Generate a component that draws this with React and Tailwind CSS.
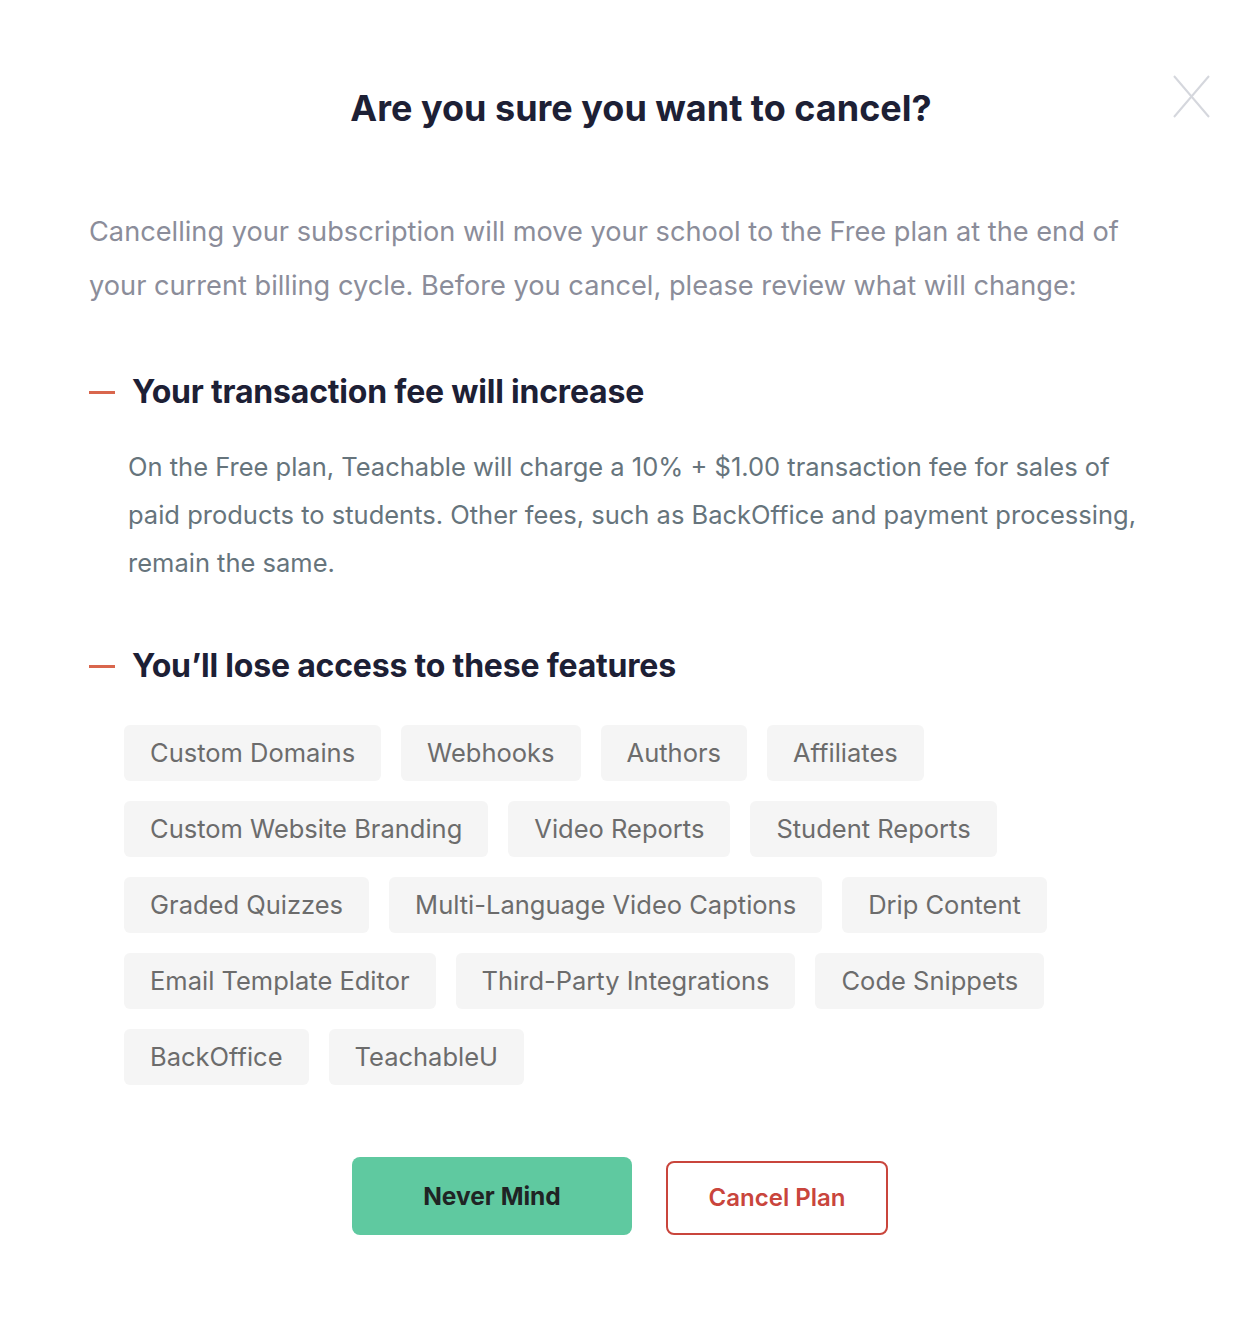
const features = [
  'Custom Domains',
  'Webhooks',
  'Authors',
  'Affiliates',
  'Custom Website Branding',
  'Video Reports',
  'Student Reports',
  'Graded Quizzes',
  'Multi-Language Video Captions',
  'Drip Content',
  'Email Template Editor',
  'Third-Party Integrations',
  'Code Snippets',
  'BackOffice',
  'TeachableU',
];

function SectionTitle({ children }) {
  return (
    <div className="flex items-center gap-[17px]">
      <span className="block w-[26px] h-[3px] bg-[#d9664d]"></span>
      <h2 className="text-[32px] leading-[40px] font-bold text-[#1d2035] tracking-[-0.2px]">{children}</h2>
    </div>
  );
}

export default function App() {
  return (
    <div className="relative min-h-[1340px] bg-white font-['Inter',sans-serif] px-[89px] pt-[84px]">
      <button className="absolute top-[75px] left-[1173px] text-[#d5d7dd]">
        <svg width="37" height="43" viewBox="0 0 37 43" fill="none" stroke="currentColor" strokeWidth="2">
          <path d="M1 1 L36 42 M36 1 L1 42" />
        </svg>
      </button>

      <h1 className="pl-[42px] text-center text-[36px] leading-[48px] font-bold text-[#1d2035]">
        Are you sure you want to cancel?
      </h1>

      <p className="mt-[73px] text-[27.2px] leading-[54px] text-[#8b8d9a]">
        Cancelling your subscription will move your school to the Free plan at the end of your current billing cycle. Before you cancel, please review what will change:
      </p>

      <div className="mt-[59px]">
        <SectionTitle>Your transaction fee will increase</SectionTitle>
        <p className="mt-[31px] pl-[39px] text-[25.5px] leading-[48px] text-[#66747c]">
          On the Free plan, Teachable will charge a 10% + $1.00 transaction fee for sales of paid products to students. Other fees, such as BackOffice and payment processing, remain the same.
        </p>
      </div>

      <div className="mt-[59px]">
        <SectionTitle>You’ll lose access to these features</SectionTitle>
        <div className="mt-[39px] pl-[35px] flex flex-wrap gap-x-[20px] gap-y-[20px]">
          {features.map((f) => (
            <span
              key={f}
              className="h-[56px] px-[26px] flex items-center rounded-[6px] bg-[#f5f5f5] text-[25.5px] text-[#6c6c6c]"
            >
              {f}
            </span>
          ))}
        </div>
      </div>

      <div className="mt-[72px] flex justify-center items-center gap-[34px]">
        <button className="w-[280px] h-[78px] rounded-[8px] bg-[#5fc9a0] text-[24.5px] font-bold text-[#1f2424]">
          Never Mind
        </button>
        <button className="w-[222px] h-[74px] rounded-[8px] border-2 border-[#c9453c] text-[24px] font-semibold text-[#c9453c] mt-[4px]">
          Cancel Plan
        </button>
      </div>
    </div>
  );
}
